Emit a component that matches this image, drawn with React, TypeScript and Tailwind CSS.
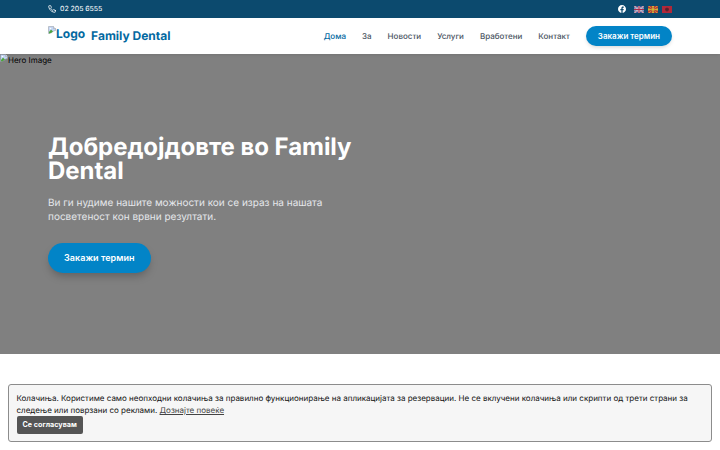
function BrokenImage() {
  return (
    <svg viewBox="0 0 16 16" className="h-2 w-2 shrink-0">
      <path d="M1 1h10l4 4v4l-4 1-3 3-3 1-2 1H1z" fill="#c3d5f5" stroke="#8f949c" />
      <path d="M11 1v4h4" fill="#fff" stroke="#8f949c" />
      <path d="M2 12l4-5 4 4-4 3-4 1z" fill="#4ea53f" />
      <circle cx="5" cy="5" r="1.6" fill="#fff" />
    </svg>
  );
}

function PhoneIcon() {
  return (
    <svg viewBox="0 0 24 24" className="h-2 w-2" fill="none" stroke="currentColor" strokeWidth="2.5" strokeLinecap="round" strokeLinejoin="round">
      <path d="M22 16.92v3a2 2 0 0 1-2.18 2 19.79 19.79 0 0 1-8.63-3.07 19.5 19.5 0 0 1-6-6 19.79 19.79 0 0 1-3.07-8.67A2 2 0 0 1 4.11 2h3a2 2 0 0 1 2 1.72 12.84 12.84 0 0 0 .7 2.81 2 2 0 0 1-.45 2.11L8.09 9.91a16 16 0 0 0 6 6l1.27-1.27a2 2 0 0 1 2.11-.45 12.84 12.84 0 0 0 2.81.7A2 2 0 0 1 22 16.92z" />
    </svg>
  );
}

function FacebookIcon() {
  return (
    <svg viewBox="0 0 24 24" className="h-2 w-2" fill="currentColor">
      <path d="M24 12.073c0-6.627-5.373-12-12-12s-12 5.373-12 12c0 5.99 4.388 10.954 10.125 11.854v-8.385H7.078v-3.47h3.047V9.43c0-3.007 1.792-4.669 4.533-4.669 1.312 0 2.686.235 2.686.235v2.953H15.83c-1.491 0-1.956.925-1.956 1.874v2.25h3.328l-.532 3.47h-2.796v8.385C19.612 23.027 24 18.062 24 12.073z" />
    </svg>
  );
}

function FlagUK() {
  return (
    <svg viewBox="0 0 20 14" className="h-[7px] w-2.5 opacity-80">
      <path d="M0 0h20v14H0z" fill="#34459a" />
      <path d="M0 0l20 14M20 0L0 14" stroke="#fff" strokeWidth="3.2" />
      <path d="M0 0l20 14M20 0L0 14" stroke="#d8324a" strokeWidth="1.2" />
      <path d="M10 0v14M0 7h20" stroke="#fff" strokeWidth="4.4" />
      <path d="M10 0v14M0 7h20" stroke="#d8213f" strokeWidth="2.4" />
    </svg>
  );
}

function FlagMK() {
  return (
    <svg viewBox="0 0 20 14" className="h-[7px] w-2.5 opacity-80">
      <path d="M0 0h20v14H0z" fill="#e02b2b" />
      <path d="M0 0h3l7 7zM20 0h-3l-7 7zM0 14h3l7-7zM20 14h-3l-7-7zM7.500 0h5L10 7zM7.500 14h5L10 7zM0 4.500v5l10-2.500zM20 4.500v5L10 7z" fill="#ffd42a" />
      <circle cx="10" cy="7" r="3.4" fill="#ffd42a" stroke="#e02b2b" strokeWidth=".5" />
    </svg>
  );
}

function FlagAL() {
  return (
    <svg viewBox="0 0 20 14" className="h-[7px] w-2.5 opacity-80">
      <path d="M0 0h20v14H0z" fill="#d9202c" />
      <path d="M8.5 3L10 4l1.5-1 .3 2L14 4.5 13.5 9l-2 .5L10 12 8.500 9.500l-2-.5L6 4.500l2.200.5z" fill="#6a181e" />
    </svg>
  );
}

const links = ["За", "Новости", "Услуги", "Вработени", "Контакт"];

export default function App() {
  return (
    <div className="flex h-[450px] w-[720px] flex-col overflow-hidden bg-white font-['Inter','Liberation_Sans',sans-serif] text-[8px] leading-3 text-black [text-rendering:geometricPrecision]">
      <div className="flex h-[18px] shrink-0 items-center justify-between bg-[#0c4a6e] px-12 text-white">
        <div className="flex items-center gap-1 text-[7px] leading-[10px]">
          <PhoneIcon />
          <span className="tracking-[-0.04px]">02 205 6555</span>
        </div>
        <div className="flex items-center">
          <FacebookIcon />
          <div className="ml-2 flex gap-1">
            <FlagUK />
            <FlagMK />
            <FlagAL />
          </div>
        </div>
      </div>

      <header className="z-10 flex h-9 shrink-0 items-center justify-between bg-white px-12 shadow-[0_2px_3px_-1px_rgba(0,0,0,0.1)]">
        <div className="flex items-center gap-1.5 text-[12px] leading-4 font-bold text-[#0369a1]">
          <div className="flex h-5 items-start">
            <BrokenImage />
            <span>Logo</span>
          </div>
          <span>Family Dental</span>
        </div>
        <nav className="flex items-center gap-4 font-medium text-[#4b5563]">
          <a className="text-[#0369a1]">Дома</a>
          {links.map((label) => (
            <a key={label}>{label}</a>
          ))}
          <button className="h-5 rounded-full bg-[#0284c7] px-3 font-semibold text-white shadow-[0_2px_4px_-1px_rgba(0,0,0,0.18)]">
            Закажи термин
          </button>
        </nav>
      </header>

      <main className="flex h-[300px] shrink-0 flex-col bg-[#808080]">
        <div className="flex h-3 items-start">
          <BrokenImage />
          <span>Hero Image</span>
        </div>
        <section className="flex flex-col items-start px-12 pt-[69px]">
          <h1 className="w-[312px] text-[24px] leading-6 font-bold tracking-[-0.05px] text-white">Добредојдовте во Family Dental</h1>
          <p className="mt-[12.5px] w-[300px] text-[10px] leading-[14px] text-[#e5e7eb]">
            Ви ги нудиме нашите можности кои се израз на нашата посветеност кон врвни резултати.
          </p>
          <button className="mt-[19.5px] h-[30px] rounded-full bg-[#0284c7] px-4 text-[9px] leading-[14px] font-semibold tracking-[0.05px] text-white shadow-[0_5px_8px_-2px_rgba(0,0,0,0.25)]">
            Закажи термин
          </button>
        </section>
      </main>

      <aside className="mx-2 mt-[29.5px] flex h-[58.5px] shrink-0 flex-col items-start rounded-[3px] border border-[#8c8c8c] bg-[#f6f6f6] px-[7.5px] pt-[7.5px] text-[#111111]">
        <p>
          Колачиња. Користиме само неопходни колачиња за правилно функционирање на апликацијата за резервации. Не се вклучени колачиња или скрипти од трети страни за следење или поврзани со реклами.{" "}
          <a className="text-[#444444] underline">Дознајте повеќе</a>
        </p>
        <button className="h-[17.5px] rounded-[2px] bg-[#555555] px-1.5 text-[7.2px] font-bold text-white">Се согласувам</button>
      </aside>
    </div>
  );
}
